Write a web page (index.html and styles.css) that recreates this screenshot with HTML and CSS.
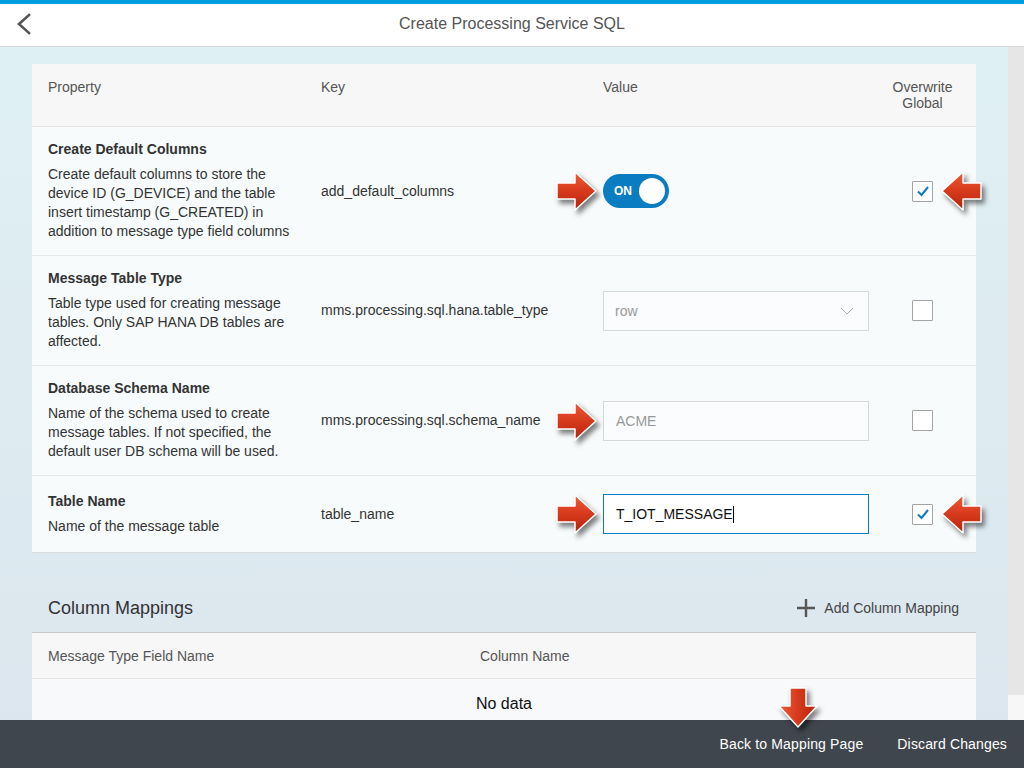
FILE: index.html
```html
<!DOCTYPE html>
<html>
<head>
<meta charset="utf-8">
<link rel="stylesheet" href="styles.css">
</head>
<body>
<div class="app">
  <div class="topline"></div>
  <header class="header">
    <button class="back" aria-label="Back">
      <svg width="20" height="24" viewBox="0 0 20 24"><polyline points="13,3 3,12 13,21" fill="none" stroke="#555" stroke-width="2.6" stroke-linecap="square"/></svg>
    </button>
    <h1 class="title">Create Processing Service SQL</h1>
  </header>
  <div class="middle">
    <main class="content">
      <section class="panel">
        <div class="row head">
          <div class="cell">Property</div>
          <div class="cell">Key</div>
          <div class="cell">Value</div>
          <div class="cell center">Overwrite<br>Global</div>
        </div>

        <div class="row">
          <div class="cell prop">
            <div class="ptitle">Create Default Columns</div>
            <div class="pdesc">Create default columns to store the device ID (G_DEVICE) and the table insert timestamp (G_CREATED) in addition to message type field columns</div>
          </div>
          <div class="cell key">add_default_columns</div>
          <div class="cell value">
            <span class="arrow arrow-r"><svg width="46" height="44" viewBox="0 0 46 44"><defs><linearGradient id="g1" x1="0" y1="0" x2="0" y2="1"><stop offset="0" stop-color="#f05a38"/><stop offset="0.5" stop-color="#d63a1c"/><stop offset="1" stop-color="#b8230c"/></linearGradient></defs><path d="M2 14 H20 V3 L41 22 L20 41 V30 H2 Z" fill="url(#g1)" stroke="#fff" stroke-width="1.5" stroke-linejoin="round"/></svg></span>
            <div class="toggle"><span class="ton">ON</span><span class="knob"></span></div>
          </div>
          <div class="cell center chk">
            <span class="checkbox checked"><svg width="14" height="12" viewBox="0 0 14 12"><polyline points="2,6.5 5.5,10 12,2" fill="none" stroke="#0a7cc1" stroke-width="2"/></svg></span>
            <span class="arrow arrow-l"><svg width="46" height="44" viewBox="0 0 46 44"><defs><linearGradient id="g2" x1="0" y1="0" x2="0" y2="1"><stop offset="0" stop-color="#f05a38"/><stop offset="0.5" stop-color="#d63a1c"/><stop offset="1" stop-color="#b8230c"/></linearGradient></defs><path d="M42 14 H24 V3 L3 22 L24 41 V30 H42 Z" fill="url(#g2)" stroke="#fff" stroke-width="1.5" stroke-linejoin="round"/></svg></span>
          </div>
        </div>

        <div class="row">
          <div class="cell prop">
            <div class="ptitle">Message Table Type</div>
            <div class="pdesc">Table type used for creating message tables. Only SAP HANA DB tables are affected.</div>
          </div>
          <div class="cell key">mms.processing.sql.hana.table_type</div>
          <div class="cell value">
            <div class="field select disabled"><span>row</span>
              <svg width="14" height="8" viewBox="0 0 14 8"><polyline points="1,1 7,7 13,1" fill="none" stroke="#aaa" stroke-width="1"/></svg>
            </div>
          </div>
          <div class="cell center chk"><span class="checkbox"></span></div>
        </div>

        <div class="row">
          <div class="cell prop">
            <div class="ptitle">Database Schema Name</div>
            <div class="pdesc">Name of the schema used to create message tables. If not specified, the default user DB schema will be used.</div>
          </div>
          <div class="cell key">mms.processing.sql.schema_name</div>
          <div class="cell value">
            <span class="arrow arrow-r"><svg width="46" height="44" viewBox="0 0 46 44"><defs><linearGradient id="g3" x1="0" y1="0" x2="0" y2="1"><stop offset="0" stop-color="#f05a38"/><stop offset="0.5" stop-color="#d63a1c"/><stop offset="1" stop-color="#b8230c"/></linearGradient></defs><path d="M2 14 H20 V3 L41 22 L20 41 V30 H2 Z" fill="url(#g3)" stroke="#fff" stroke-width="1.5" stroke-linejoin="round"/></svg></span>
            <div class="field disabled"><span>ACME</span></div>
          </div>
          <div class="cell center chk"><span class="checkbox"></span></div>
        </div>

        <div class="row last">
          <div class="cell prop">
            <div class="ptitle">Table Name</div>
            <div class="pdesc">Name of the message table</div>
          </div>
          <div class="cell key">table_name</div>
          <div class="cell value">
            <span class="arrow arrow-r"><svg width="46" height="44" viewBox="0 0 46 44"><defs><linearGradient id="g4" x1="0" y1="0" x2="0" y2="1"><stop offset="0" stop-color="#f05a38"/><stop offset="0.5" stop-color="#d63a1c"/><stop offset="1" stop-color="#b8230c"/></linearGradient></defs><path d="M2 14 H20 V3 L41 22 L20 41 V30 H2 Z" fill="url(#g4)" stroke="#fff" stroke-width="1.5" stroke-linejoin="round"/></svg></span>
            <div class="field focused"><span>T_IOT_MESSAGE</span><span class="caret"></span></div>
          </div>
          <div class="cell center chk">
            <span class="checkbox checked"><svg width="14" height="12" viewBox="0 0 14 12"><polyline points="2,6.5 5.5,10 12,2" fill="none" stroke="#0a7cc1" stroke-width="2"/></svg></span>
            <span class="arrow arrow-l"><svg width="46" height="44" viewBox="0 0 46 44"><defs><linearGradient id="g5" x1="0" y1="0" x2="0" y2="1"><stop offset="0" stop-color="#f05a38"/><stop offset="0.5" stop-color="#d63a1c"/><stop offset="1" stop-color="#b8230c"/></linearGradient></defs><path d="M42 14 H24 V3 L3 22 L24 41 V30 H42 Z" fill="url(#g5)" stroke="#fff" stroke-width="1.5" stroke-linejoin="round"/></svg></span>
          </div>
        </div>
      </section>

      <section class="mappings">
        <div class="toolbar">
          <h2 class="mtitle">Column Mappings</h2>
          <button class="addbtn">
            <svg width="18" height="18" viewBox="0 0 18 18"><path d="M9 0 V18 M0 9 H18" stroke="#555" stroke-width="2.4"/></svg>
            <span>Add Column Mapping</span>
          </button>
        </div>
        <div class="mtable">
          <div class="mhead">
            <div class="mcell c1">Message Type Field Name</div>
            <div class="mcell">Column Name</div>
          </div>
          <div class="nodata">No data</div>
        </div>
      </section>
    </main>
    <div class="scrollbar"><div class="track"></div><div class="corner"></div></div>
  </div>
  <footer class="footer">
    <button class="fbtn">Back to Mapping Page
      <span class="arrow arrow-d"><svg width="44" height="46" viewBox="0 0 44 46"><defs><linearGradient id="g6" x1="0" y1="0" x2="1" y2="0"><stop offset="0" stop-color="#f05a38"/><stop offset="0.5" stop-color="#d63a1c"/><stop offset="1" stop-color="#b8230c"/></linearGradient></defs><path d="M14 2 V20 H3 L22 41 L41 20 H30 V2 Z" fill="url(#g6)" stroke="#fff" stroke-width="1.5" stroke-linejoin="round"/></svg></span>
    </button>
    <button class="fbtn">Discard Changes</button>
  </footer>
</div>
</body>
</html>
```

FILE: styles.css
```css
* { box-sizing: border-box; }
html, body { margin: 0; padding: 0; }
body {
  font-family: "Liberation Sans", Arial, sans-serif;
  font-size: 14px;
  color: #333;
  width: 1024px;
  height: 768px;
  overflow: hidden;
}
button { font-family: inherit; font-size: inherit; border: 0; background: none; padding: 0; cursor: pointer; }

.app { display: flex; flex-direction: column; height: 768px; }
.topline { height: 4px; background: #009de0; flex: none; }
.header {
  flex: none;
  height: 43px;
  background: #fff;
  border-bottom: 1px solid #d9d9d9;
  display: flex;
  align-items: center;
  position: relative;
}
.back { position: absolute; left: 16px; top: 8px; width: 20px; height: 24px; }
.back svg { display: block; }
.title {
  margin: 0 auto;
  font-size: 16px;
  font-weight: normal;
  color: #555;
  padding-bottom: 2px;
}

.middle { flex: 1; display: flex; overflow: hidden; min-height: 0; }
.content {
  flex: 1;
  padding: 17px 32px 0;
  background: linear-gradient(#dff0f4, #dce6ee);
  overflow: hidden;
}
.scrollbar { width: 16px; flex: none; display: flex; flex-direction: column; }
.scrollbar .track { flex: 1; background: #e6e6e6; }
.scrollbar .corner { height: 25px; background: #f7f7f7; }

.panel { background: #f7fbfc; }
.row {
  display: grid;
  grid-template-columns: 273px 282px 282px 107px;
  align-items: center;
  border-bottom: 1px solid #e3e8ea;
}
.row.last { border-bottom: 1px solid #d8dcde; }
.row.head {
  background: #f7f7f7;
  align-items: start;
  height: 63px;
  color: #555;
  border-bottom: 1px solid #e3e3e3;
}
.row.head .cell { padding-top: 15px; line-height: 16px; }
.cell { padding: 0 16px; }
.cell.center { text-align: center; padding: 0; }
.prop { padding: 13px 4px 14px 16px; line-height: 19px; }
.ptitle { font-weight: bold; margin-bottom: 6px; }
.key { line-height: 19px; }
.value { position: relative; padding: 18px 0 18px 16px; }

.toggle {
  width: 66px;
  height: 34px;
  border-radius: 17px;
  background: #0a7cc1;
  display: flex;
  align-items: center;
  justify-content: space-between;
  padding: 0 4px 0 11px;
}
.ton { color: #fff; font-weight: bold; font-size: 12px; }
.knob { width: 26px; height: 26px; border-radius: 50%; background: #fff; }

.field {
  height: 40px;
  border: 1px solid #d5d9db;
  background: #fafcfd;
  display: flex;
  align-items: center;
  padding: 0 12px;
  font-size: 14px;
}
.field.disabled { color: #999; }
.select { justify-content: space-between; padding: 0 14px 0 11px; }
.select svg { display: block; }
.field.focused { background: #fff; border-color: #0a7cc1; color: #111; }
.caret { width: 1px; height: 17px; background: #000; margin-left: 0; }

.chk { position: relative; display: flex; justify-content: center; }
.checkbox {
  width: 21px;
  height: 21px;
  border: 1px solid #a3a3a3;
  border-radius: 1px;
  background: #fff;
  display: flex;
  align-items: center;
  justify-content: center;
}
.checkbox svg { display: block; }

.arrow { position: absolute; top: 50%; transform: translateY(-50%); line-height: 0; filter: drop-shadow(3px 4px 2.5px rgba(0,0,0,0.5)); }
.arrow svg { display: block; }
.value .arrow-r { left: -32px; }
.chk .arrow-l { left: 70px; }

.mappings { margin-top: 31px; }
.toolbar { height: 48px; display: flex; align-items: center; justify-content: space-between; padding: 0 17px 0 16px; }
.mtitle { margin: 0; font-size: 18px; font-weight: normal; color: #333; }
.addbtn { display: flex; align-items: center; gap: 9px; color: #444; font-size: 14px; }
.addbtn svg { display: block; }

.mtable { background: #f7f9fb; border-top: 1px solid #c9c9c9; }
.mhead {
  height: 46px;
  display: grid;
  grid-template-columns: 432px 1fr;
  align-items: center;
  background: #f7f7f7;
  border-bottom: 1px solid #e3e3e3;
  color: #555;
}
.mcell { padding: 0 16px; }
.nodata { height: 50px; display: flex; align-items: center; justify-content: center; font-size: 16px; color: #111; }

.footer {
  flex: none;
  height: 48px;
  background: #3f464d;
  display: flex;
  justify-content: flex-end;
  align-items: stretch;
  position: relative;
}
.fbtn { color: #fff; font-size: 14px; padding: 0 17px; position: relative; letter-spacing: 0.15px; }
.fbtn .arrow-d { top: -34px; left: 74px; transform: none; }
```
